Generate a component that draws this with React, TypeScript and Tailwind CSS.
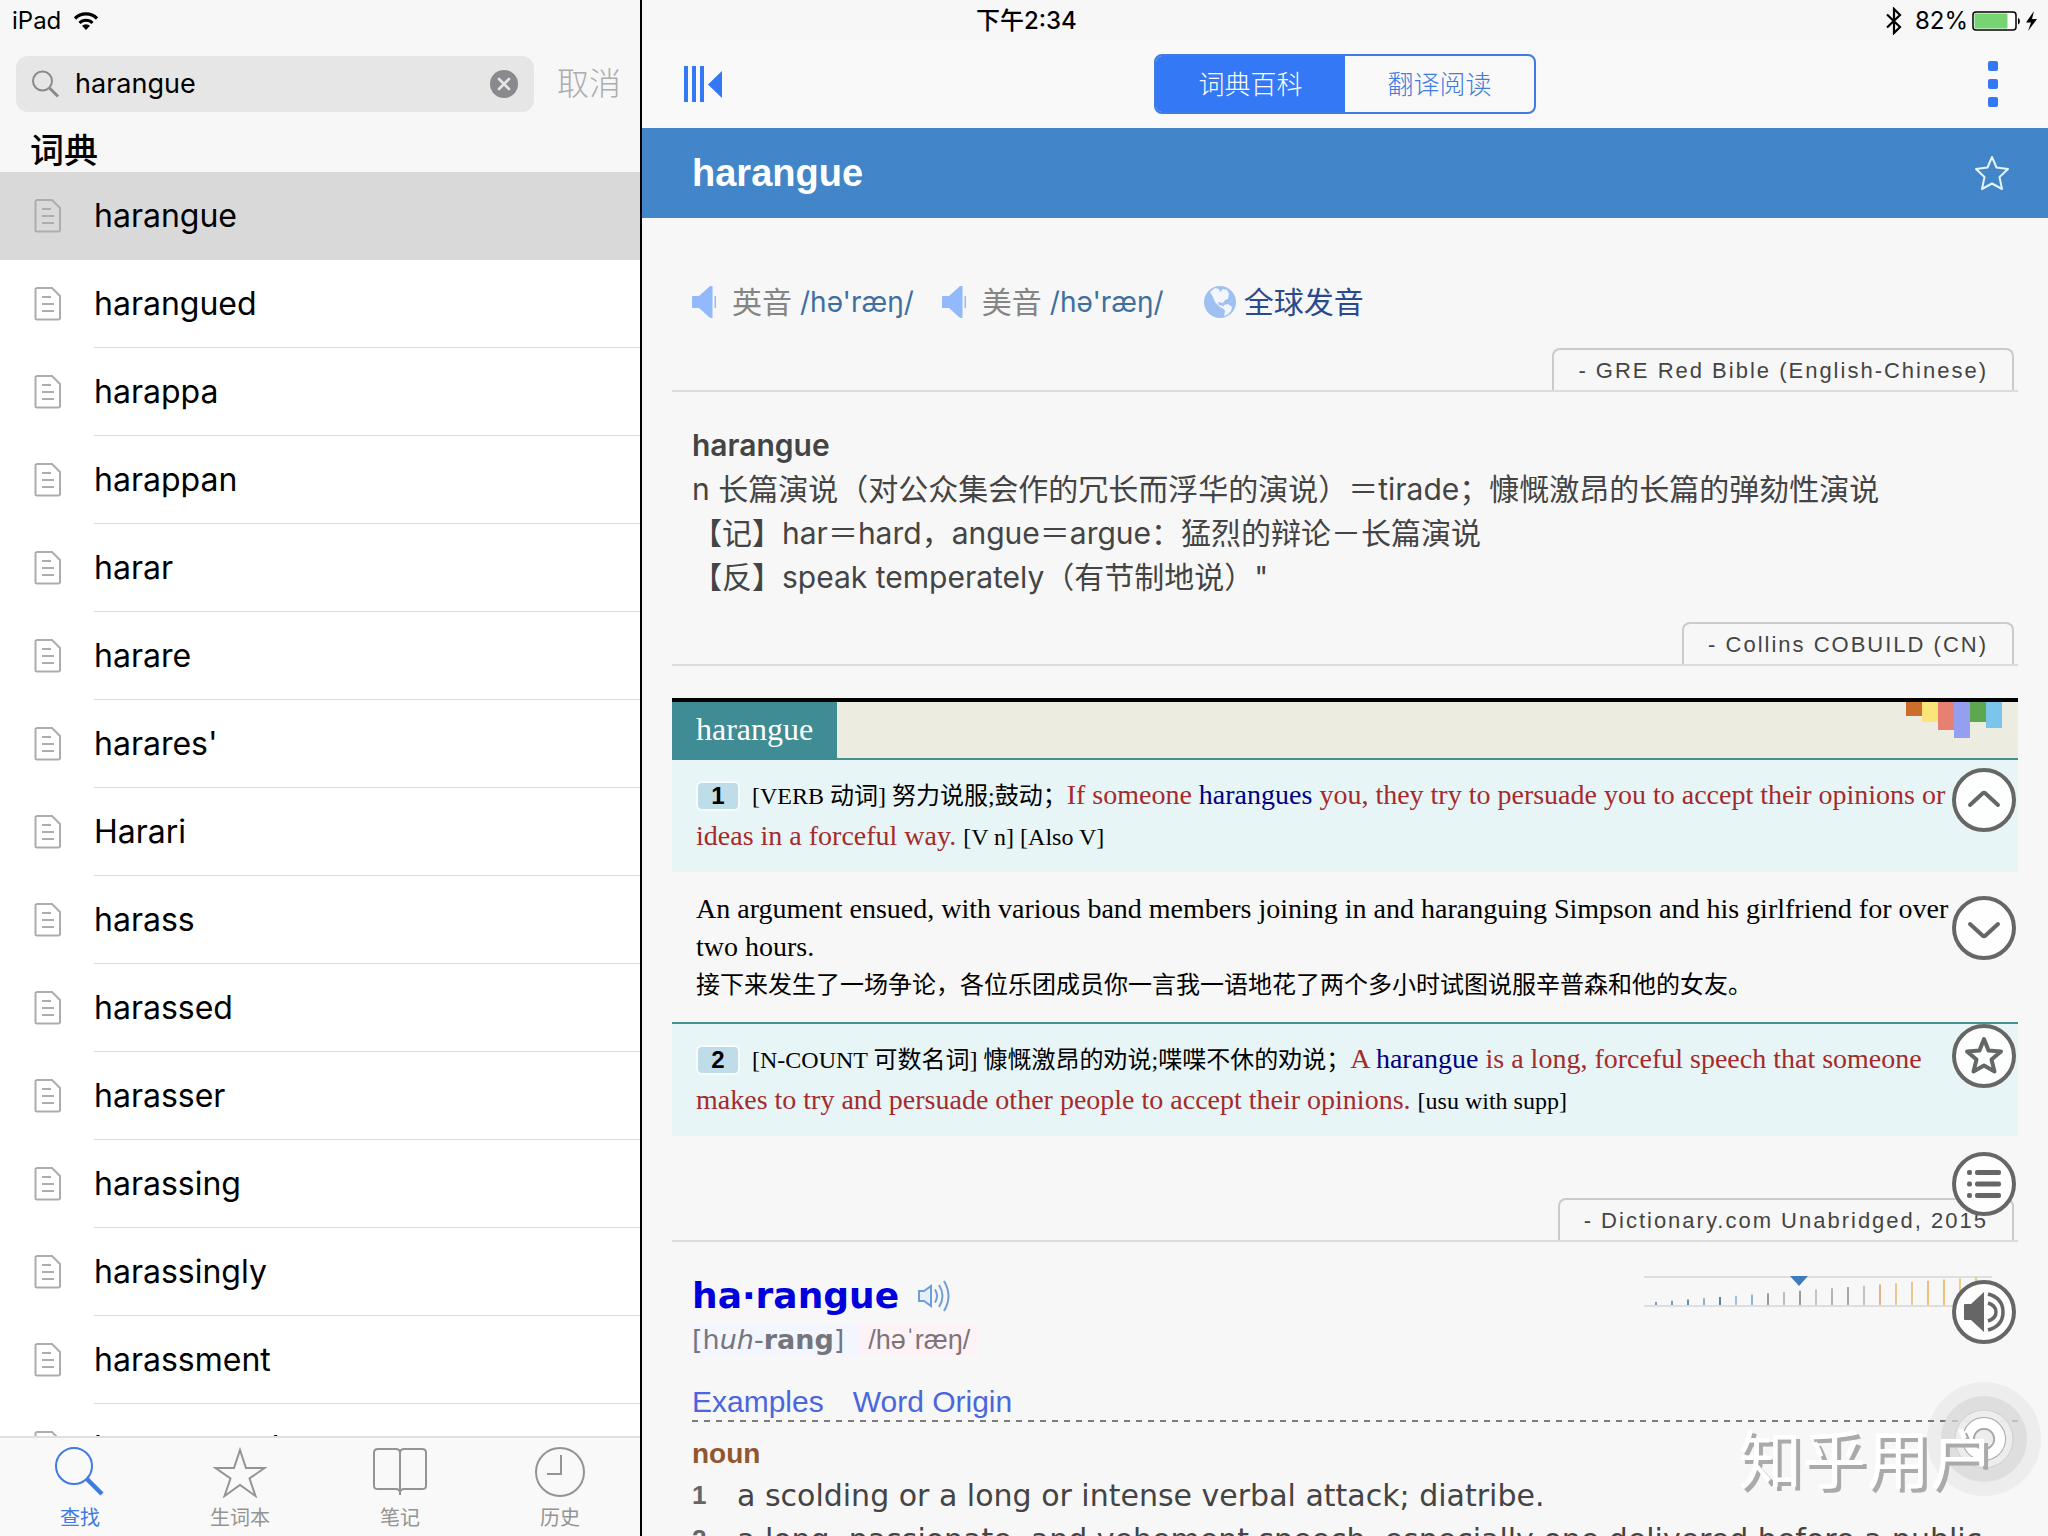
import { useState } from "react";

const words = [
  "harangue",
  "harangued",
  "harappa",
  "harappan",
  "harar",
  "harare",
  "harares'",
  "Harari",
  "harass",
  "harassed",
  "harasser",
  "harassing",
  "harassingly",
  "harassment",
  "harassment's",
];

function DocIcon() {
  return (
    <svg width="28" height="34" viewBox="0 0 28 34" fill="none" stroke="#adadad" strokeWidth="2" aria-hidden="true">
      <path d="M3 1h15l8 8v22a1.500 1.500 0 0 1-1.500 1.500H3A1.500 1.500 0 0 1 1.500 31V2.500A1.500 1.500 0 0 1 3 1z" />
      <path d="M8 10h9M8 17h12M8 24h12" />
    </svg>
  );
}

function WifiIcon() {
  return (
    <svg width="26" height="20" viewBox="0 0 26 20" fill="none" stroke="#000" aria-hidden="true">
      <path d="M2 7.500a15.500 15.500 0 0 1 22 0" strokeWidth="3.200" />
      <path d="M6.500 12a9.200 9.200 0 0 1 13 0" strokeWidth="3" />
      <path d="M13 19l-4-4.200a5.700 5.700 0 0 1 8 0z" fill="#000" stroke="none" />
    </svg>
  );
}

function SearchIcon() {
  return (
    <svg width="28" height="28" viewBox="0 0 28 28" fill="none" stroke="#8a8a8e" aria-hidden="true">
      <circle cx="10.500" cy="11" r="9.500" strokeWidth="2" />
      <path d="M17.500 18l8.500 8.500" strokeWidth="3" />
    </svg>
  );
}

function ClearIcon() {
  return (
    <svg width="28" height="28" viewBox="0 0 28 28" aria-hidden="true">
      <circle cx="14" cy="14" r="14" fill="#8a8a8e" />
      <path d="M9 9l10 10M19 9L9 19" stroke="#e6e6e6" strokeWidth="2.600" strokeLinecap="round" />
    </svg>
  );
}

function Sidebar() {
  const [query, setQuery] = useState("harangue");
  const [current, setCurrent] = useState("harangue");
  return (
    <aside className="flex min-h-0 min-w-0 flex-col border-r-2 border-black bg-white">
      <div className="flex h-10 shrink-0 items-center gap-3 bg-[#f7f7f7] px-3 pt-[2px] text-2xl text-black">
        <span>iPad</span>
        <WifiIcon />
      </div>
      <div className="flex shrink-0 items-center bg-[#f7f7f7] pt-4 pl-4">
        <div className="flex h-14 min-w-0 flex-1 items-center gap-[15px] rounded-xl bg-[#e6e6e6] px-4">
          <SearchIcon />
          <input
            aria-label="查找"
            value={query}
            onChange={(e) => setQuery(e.target.value)}
            className="min-w-0 flex-1 bg-transparent text-[27px] leading-9 text-black outline-none"
          />
          <button aria-label="清除" onClick={() => setQuery("")}>
            <ClearIcon />
          </button>
        </div>
        <button className="w-[106px] pl-1 text-center text-[32px] leading-10 font-light text-[#adadad]">取消</button>
      </div>
      <h2 className="h-[60px] shrink-0 bg-[#f7f7f7] pl-[30px] text-[34px] leading-[78px] font-medium text-black">词典</h2>
      <ul className="min-h-0 flex-1 overflow-hidden">
        {words.map((w) => (
          <li key={w} className={w === current ? "bg-[#d9d9d9]" : "bg-white"}>
            <button onClick={() => setCurrent(w)} className="flex h-[88px] w-full items-center pl-[34px] text-left">
              <DocIcon />
              <span
                className={
                  w === current
                    ? "ml-8 flex h-full flex-1 items-center border-b border-transparent text-[32px] text-black"
                    : "ml-8 flex h-full flex-1 items-center border-b border-[#dcdcdc] text-[32px] text-black"
                }
              >
                {w}
              </span>
            </button>
          </li>
        ))}
      </ul>
      <nav className="grid h-[100px] shrink-0 grid-cols-4 border-t-2 border-[#e0e0e0] bg-[#f9f9f9] text-xl leading-6">
        <button className="flex flex-col items-center gap-2 pt-2 text-[#3f7be0]">
          <svg width="52" height="52" viewBox="0 0 52 52" fill="none" stroke="currentColor" aria-hidden="true">
            <circle cx="20" cy="20" r="18" strokeWidth="2" />
            <path d="M33 33l15 15" strokeWidth="4.500" />
          </svg>
          查找
        </button>
        <button className="flex flex-col items-center gap-2 pt-2 text-[#949494]">
          <svg width="54" height="52" viewBox="0 0 54 52" fill="none" stroke="currentColor" strokeWidth="2" aria-hidden="true">
            <path d="M27 4l6 18h18.500L36.500 32.500 42.500 50 27 39 11.500 50l6-17.500L2.500 22H21z" />
          </svg>
          生词本
        </button>
        <button className="flex flex-col items-center gap-2 pt-2 text-[#949494]">
          <svg width="54" height="52" viewBox="0 0 54 52" fill="none" stroke="currentColor" strokeWidth="2" aria-hidden="true">
            <path d="M27 6c-.5-2-2-3-4-3H5C2.500 3 1 4 1 6.500V40c0 2 1.500 3 4 3h18c2.500 0 3.500 1 4 3 .5-2 1.500-3 4-3h18c2.500 0 4-1 4-3V6.500C53 4 51.500 3 49 3H31c-2 0-3.500 1-4 3zM27 5v44" />
          </svg>
          笔记
        </button>
        <button className="flex flex-col items-center gap-2 pt-2 text-[#949494]">
          <svg width="52" height="52" viewBox="0 0 52 52" fill="none" stroke="currentColor" strokeWidth="2" aria-hidden="true">
            <circle cx="26" cy="26" r="24" />
            <path d="M27 9v19H13" />
          </svg>
          历史
        </button>
      </nav>
    </aside>
  );
}

function StatusRight() {
  return (
    <div className="flex h-10 shrink-0 items-center justify-between bg-[#f7f7f7] pt-[2px] pr-2 pl-[334px] text-2xl text-black">
      <span className="font-medium">下午2:34</span>
      <div className="flex items-center">
        <svg width="18" height="28" viewBox="0 0 18 28" fill="none" stroke="#000" strokeWidth="2.200" aria-hidden="true">
          <path d="M2 7.500l13 12.500-6 6V2l6 6L2 20.500" />
        </svg>
        <span className="ml-3">82%</span>
        <svg width="68" height="22" viewBox="0 0 68 22" className="ml-1" aria-hidden="true">
          <rect x="1" y="2" width="43" height="18" rx="3" fill="#fff" stroke="#000" strokeWidth="1.500" />
          <rect x="2.500" y="3.500" width="33" height="15" rx="1" fill="#76d572" />
          <path d="M46 8c2.500.5 2.500 6 0 6.500z" fill="#000" />
          <path d="M62 1l-8 11.500h5L56 21l9-12h-5z" fill="#000" />
        </svg>
      </div>
    </div>
  );
}

function Toolbar() {
  const [tab, setTab] = useState(0);
  const on = "w-[189px] bg-[#3478f6] text-white";
  const off = "w-[189px] text-[#3f7be0]";
  return (
    <div className="grid h-[88px] shrink-0 grid-cols-[1fr_auto_1fr] items-center bg-[#f9f9f9] px-[42px]">
      <button aria-label="收起侧栏" className="justify-self-start">
        <svg width="38" height="36" viewBox="0 0 38 36" fill="#3478f6" aria-hidden="true">
          <path d="M0 0h4v36H0zM8 0h4v36H8zM16 0h4v36h-4zM38 5v27L24 18.500z" />
        </svg>
      </button>
      <div className="flex h-[60px] overflow-hidden rounded-lg border-2 border-[#3f7be0] text-[26px] font-light">
        <button className={tab === 0 ? on : off} onClick={() => setTab(0)}>词典百科</button>
        <button className={tab === 1 ? on : off} onClick={() => setTab(1)}>翻译阅读</button>
      </div>
      <button aria-label="更多" className="flex w-[26px] flex-col items-center gap-2 justify-self-end">
        <span className="size-[10px] rounded-xs bg-[#3478f6]" />
        <span className="size-[10px] rounded-xs bg-[#3478f6]" />
        <span className="size-[10px] rounded-xs bg-[#3478f6]" />
      </button>
    </div>
  );
}

function SayIcon() {
  return (
    <svg width="24" height="32" viewBox="0 0 24 32" fill="#91b9fb" aria-hidden="true">
      <path d="M0 11q0-1 1-1h6L17 1q1-1 2-1h1.500v32H19q-1 0-2-1L7 22H1q-1 0-1-1zM22.500 10H24v12h-1.500z" />
    </svg>
  );
}

function Globe() {
  return (
    <svg width="32" height="32" viewBox="0 0 32 32" aria-hidden="true">
      <circle cx="16" cy="16" r="16" fill="#9fc0f0" />
      <path d="M6 6l5-4 4 1 1 3 3-3 4 1 2 4-1 5-3 1-2 3-5-1 1 3 4 1 1 3-4-2-5-5-2-5z" fill="#f3f7fd" />
      <path d="M20 19l4-1 4 3-1 4-4 4-3 1 1-5-2-3z" fill="#f3f7fd" />
    </svg>
  );
}

function SourceTab({ name }: { name: string }) {
  return (
    <header className="flex justify-end border-b-2 border-[#dcdcdc] pr-1">
      <h2 className="h-[42px] rounded-t-lg border-2 border-b-0 border-[#cbcbcb] px-6 font-['Liberation_Sans',sans-serif] text-[22px] leading-[42px] tracking-[2px] text-[#444]">
        {name}
      </h2>
    </header>
  );
}

function Num({ n }: { n: number }) {
  return (
    <b className="mr-3 inline-block h-[30px] w-11 rounded-md border-2 border-[#f6fbfd] bg-[#bfdce9] text-center font-['Liberation_Sans',sans-serif] text-2xl leading-[26px] font-bold">
      {n}
    </b>
  );
}

const swatches = [
  "h-[14px] bg-[#cc6d2c]",
  "h-5 bg-[#fce578]",
  "h-7 bg-[#e88072]",
  "h-9 bg-[#959ff0]",
  "h-5 bg-[#5ba84f]",
  "h-[26px] bg-[#7bc4ec]",
];

function Collins() {
  const box = "bg-[#e7f5f7] px-6 pt-[15px] pb-[15px] text-2xl leading-10";
  return (
    <article className="mt-8 font-['Liberation_Serif','Noto_Sans_CJK_SC',serif] text-black">
      <div className="flex h-[62px] border-t-4 border-black">
        <h3 className="bg-[#3f8c94] px-6 text-[32px] leading-[54px] text-white">harangue</h3>
        <div className="flex flex-1 items-start justify-end border-b-2 border-[#46908f] bg-[#ecece0] pr-4">
          {swatches.map((s, i) => (
            <span key={i} className={"w-4 " + s} />
          ))}
        </div>
      </div>
      <p className={box}>
        <Num n={1} />
        [VERB 动词] 努力说服;鼓动；
        <span className="text-[28px] text-[#a52a2a]">
          If someone <a href="#harangue" className="text-[#000080]">harangues</a> you, they try to persuade you to accept their opinions or ideas in a forceful way.{" "}
        </span>
        [V n] [Also V]
      </p>
      <div className="px-6 pt-[18px] pb-[18px] text-[28px] leading-[38px]">
        <p>An argument ensued, with various band members joining in and haranguing Simpson and his girlfriend for over two hours.</p>
        <p className="text-2xl leading-[38px]">接下来发生了一场争论，各位乐团成员你一言我一语地花了两个多小时试图说服辛普森和他的女友。</p>
      </div>
      <div className="border-t-2 border-[#46908f]">
        <p className={box}>
          <Num n={2} />
          [N-COUNT 可数名词] 慷慨激昂的劝说;喋喋不休的劝说；
          <span className="text-[28px] text-[#a52a2a]">
            A <a href="#harangue" className="text-[#000080]">harangue</a> is a long, forceful speech that someone makes to try and persuade other people to accept their opinions.{" "}
          </span>
          [usu with supp]
        </p>
      </div>
    </article>
  );
}

const tickColors = [
  "#7d9cba", "#7d9cba", "#5f8fbd", "#8fb0c8", "#5580a5", "#9cc3da", "#8fb8d8",
  "#9a9a98", "#bdbdb8", "#9a9a98", "#c4c4c0", "#b4b4b0", "#a8a8a0", "#c4c4bc",
  "#dfb48a", "#e8c890", "#e8c890", "#ecc078", "#ecc078", "#f0d088", "#f0d088",
];

function Difficulty() {
  return (
    <svg width="348" height="34" viewBox="0 0 348 34" aria-hidden="true">
      <path d="M0 3h348M0 32h348" stroke="#dedede" strokeWidth="2" />
      {tickColors.map((c, i) => (
        <rect key={i} x={11 + i * 16} y={28 - i * 1.25} width="2" height={3 + i * 1.25} fill={c} />
      ))}
      <path d="M146 2h18l-9 10z" fill="#3f7cbc" />
    </svg>
  );
}

function DictionaryCom() {
  const entries = [
    "a scolding or a long or intense verbal attack; diatribe.",
    "a long, passionate, and vehement speech, especially one delivered before a public gathering.",
  ];
  return (
    <article className="pt-8 pl-5">
      <div className="flex items-start justify-between pr-[26px]">
        <div>
          <div className="flex items-center gap-[18px]">
            <h3 className="font-['DejaVu_Sans',sans-serif] text-[36px] leading-[44px] font-bold text-[#0000dd]">ha·rangue</h3>
            <button aria-label="播放发音">
              <svg width="34" height="32" viewBox="0 0 34 32" fill="none" stroke="#6f9ed8" strokeWidth="2" aria-hidden="true">
                <path d="M2 11h5l7-5v20l-7-5H2z" fill="#e4effb" />
                <path d="M18 9.500q4 6.500 0 13M22 5q7 11 0 22M27 1q9 15 0 30" />
              </svg>
            </button>
          </div>
          <p className="mt-[6px] flex font-['DejaVu_Sans',sans-serif] text-[27px] leading-8 text-[#75757d]">
            <span className="bg-[#f3f6fe] pr-4">
              [h<i>uh</i>-<b>rang</b>]
            </span>
            <span className="bg-[#fdf2f5] px-2 font-['Liberation_Sans',sans-serif] text-[27px] text-[#7d7478]">/həˈræŋ/</span>
          </p>
        </div>
        <Difficulty />
      </div>
      <div className="mt-7 flex gap-[29px] font-['Liberation_Sans',sans-serif] text-[30px] leading-9 text-[#4a66dd]">
        <a href="#examples">Examples</a>
        <a href="#origin">Word Origin</a>
      </div>
      <div className="h-[2px] bg-[repeating-linear-gradient(90deg,#7c7c7c_0_6px,transparent_6px_12px)]" />
      <h4 className="mt-3 font-['Liberation_Sans',sans-serif] text-[28px] leading-10 font-bold text-[#91562f]">noun</h4>
      <ol className="font-['DejaVu_Sans',sans-serif] text-[30px] leading-[44px] text-[#444]">
        {entries.map((e, i) => (
          <li key={e} className="flex">
            <b className="w-[45px] shrink-0 font-['Liberation_Sans',sans-serif] text-[26px] leading-[42px] text-[#666]">{i + 1}</b>
            <span>{e}</span>
          </li>
        ))}
      </ol>
    </article>
  );
}

function FloatingButtons() {
  const cls = "flex size-16 items-center justify-center rounded-full border-4 border-[#666] bg-white/90 text-[#666]";
  return (
    <div className="absolute top-[768px] right-8 flex flex-col gap-16">
      <button aria-label="上一个" className={cls}>
        <svg width="36" height="36" viewBox="0 0 36 36" fill="none" stroke="currentColor" strokeWidth="4" strokeLinecap="round" strokeLinejoin="round">
          <path d="M4 23L16.500 11.500q1.500-1.500 3 0L32 23" />
        </svg>
      </button>
      <button aria-label="下一个" className={cls}>
        <svg width="36" height="36" viewBox="0 0 36 36" fill="none" stroke="currentColor" strokeWidth="4" strokeLinecap="round" strokeLinejoin="round">
          <path d="M4 14l12.500 11.500q1.500 1.500 3 0L32 14" />
        </svg>
      </button>
      <button aria-label="收藏" className={cls}>
        <svg width="40" height="40" viewBox="0 0 40 40" fill="none" stroke="currentColor" strokeWidth="4" strokeLinejoin="round">
          <path d="M20 3l4.500 11.500L37 15.500 27.500 23.500 30.500 35.500 20 29.500 9.500 35.500 12.500 23.500 3 15.500 15.500 14.500z" />
        </svg>
      </button>
      <button aria-label="目录" className={cls}>
        <svg width="36" height="30" viewBox="0 0 36 30" fill="currentColor">
          <rect x="1" y="1" width="5" height="5" rx="2" />
          <rect x="9" y="1" width="26" height="5" rx="2" />
          <rect x="1" y="12.500" width="5" height="5" rx="2" />
          <rect x="9" y="12.500" width="26" height="5" rx="2" />
          <rect x="1" y="24" width="5" height="5" rx="2" />
          <rect x="9" y="24" width="26" height="5" rx="2" />
        </svg>
      </button>
      <button aria-label="朗读" className={cls}>
        <svg width="42" height="42" viewBox="0 0 42 42" fill="none" stroke="currentColor" strokeWidth="3.500">
          <path d="M1 14q0-1 1-1h6L21 1v40L8 29H2q-1 0-1-1z" fill="currentColor" stroke="none" />
          <path d="M25 12q8 2.500 8 9t-8 9M25 3q15 4 15 18T25 39" />
        </svg>
      </button>
    </div>
  );
}

function AssistiveTouch() {
  return (
    <svg width="116" height="118" viewBox="0 0 116 118" className="absolute right-[6px] bottom-[38px]" aria-hidden="true">
      <circle cx="58" cy="59" r="57" fill="#000" fillOpacity=".04" />
      <circle cx="58" cy="59" r="43" fill="#d8d8d8" fillOpacity=".75" />
      <circle cx="58" cy="59" r="29" fill="#f0f0ee" fillOpacity=".8" stroke="#d0d0d0" strokeWidth="1" />
      <circle cx="58" cy="59" r="16" fill="none" stroke="#a8a8a8" strokeWidth="12" />
      <circle cx="58" cy="59" r="16" fill="none" stroke="#fff" strokeWidth="10" />
      <circle cx="58" cy="59" r="10" fill="#ededed" stroke="#a8a8a8" strokeWidth="1.500" />
    </svg>
  );
}

export default function App() {
  return (
    <div className="grid h-screen grid-cols-[321fr_703fr] overflow-hidden bg-[#f7f7f7] font-['Inter','Noto_Sans_CJK_SC',sans-serif]">
      <Sidebar />
      <section className="relative flex min-h-0 min-w-0 flex-col overflow-hidden">
        <StatusRight />
        <Toolbar />
        <div className="flex h-[90px] shrink-0 items-center justify-between bg-[#4285c9] pr-[38px] pl-[50px]">
          <h1 className="font-['Liberation_Sans',sans-serif] text-[38px] font-bold text-white">harangue</h1>
          <button aria-label="收藏单词">
            <svg width="36" height="36" viewBox="0 0 36 36" fill="none" stroke="#e6f4fb" strokeWidth="2" strokeLinejoin="round" aria-hidden="true">
              <path d="M18 2l4.500 10.500L34 14 25.500 22 28 34 18 28.500 8 34 10.500 22 2 14 13.500 12.500z" />
            </svg>
          </button>
        </div>
        <main className="min-h-0 flex-1 overflow-hidden px-[30px]">
          <div className="mt-[62px] mb-6 flex h-11 items-center pl-5 text-[30px] leading-[44px]">
            <button className="flex items-center">
              <SayIcon />
              <span className="ml-4 text-[#858585]">英音</span>
              <span className="ml-2 text-[28px] text-[#3d6f9f]">/hə'ræŋ/</span>
            </button>
            <button className="ml-7 flex items-center">
              <SayIcon />
              <span className="ml-4 text-[#858585]">美音</span>
              <span className="ml-2 text-[28px] text-[#3d6f9f]">/hə'ræŋ/</span>
            </button>
            <a href="#pronounce" className="ml-10 flex items-center gap-2 text-[#2b4a8e]">
              <Globe />
              全球发音
            </a>
          </div>
          <SourceTab name="- GRE Red Bible (English-Chinese)" />
          <article className="px-5 pt-[31px] pb-[23px] text-[30px] leading-[44px] text-[#444]">
            <h3 className="font-semibold">harangue</h3>
            <p>n 长篇演说（对公众集会作的冗长而浮华的演说）＝tirade；慷慨激昂的长篇的弹劾性演说</p>
            <p>【记】har＝hard，angue＝argue：猛烈的辩论－长篇演说</p>
            <p>【反】speak temperately（有节制地说）"</p>
          </article>
          <SourceTab name="- Collins COBUILD (CN)" />
          <Collins />
          <div className="mt-[62px]">
            <SourceTab name="- Dictionary.com Unabridged, 2015" />
          </div>
          <DictionaryCom />
        </main>
        <FloatingButtons />
        <AssistiveTouch />
        <span className="absolute right-[54px] bottom-[34px] text-[64px] leading-[84px] text-white [text-shadow:4px_4px_0_#aaa]">知乎用户</span>
      </section>
    </div>
  );
}
